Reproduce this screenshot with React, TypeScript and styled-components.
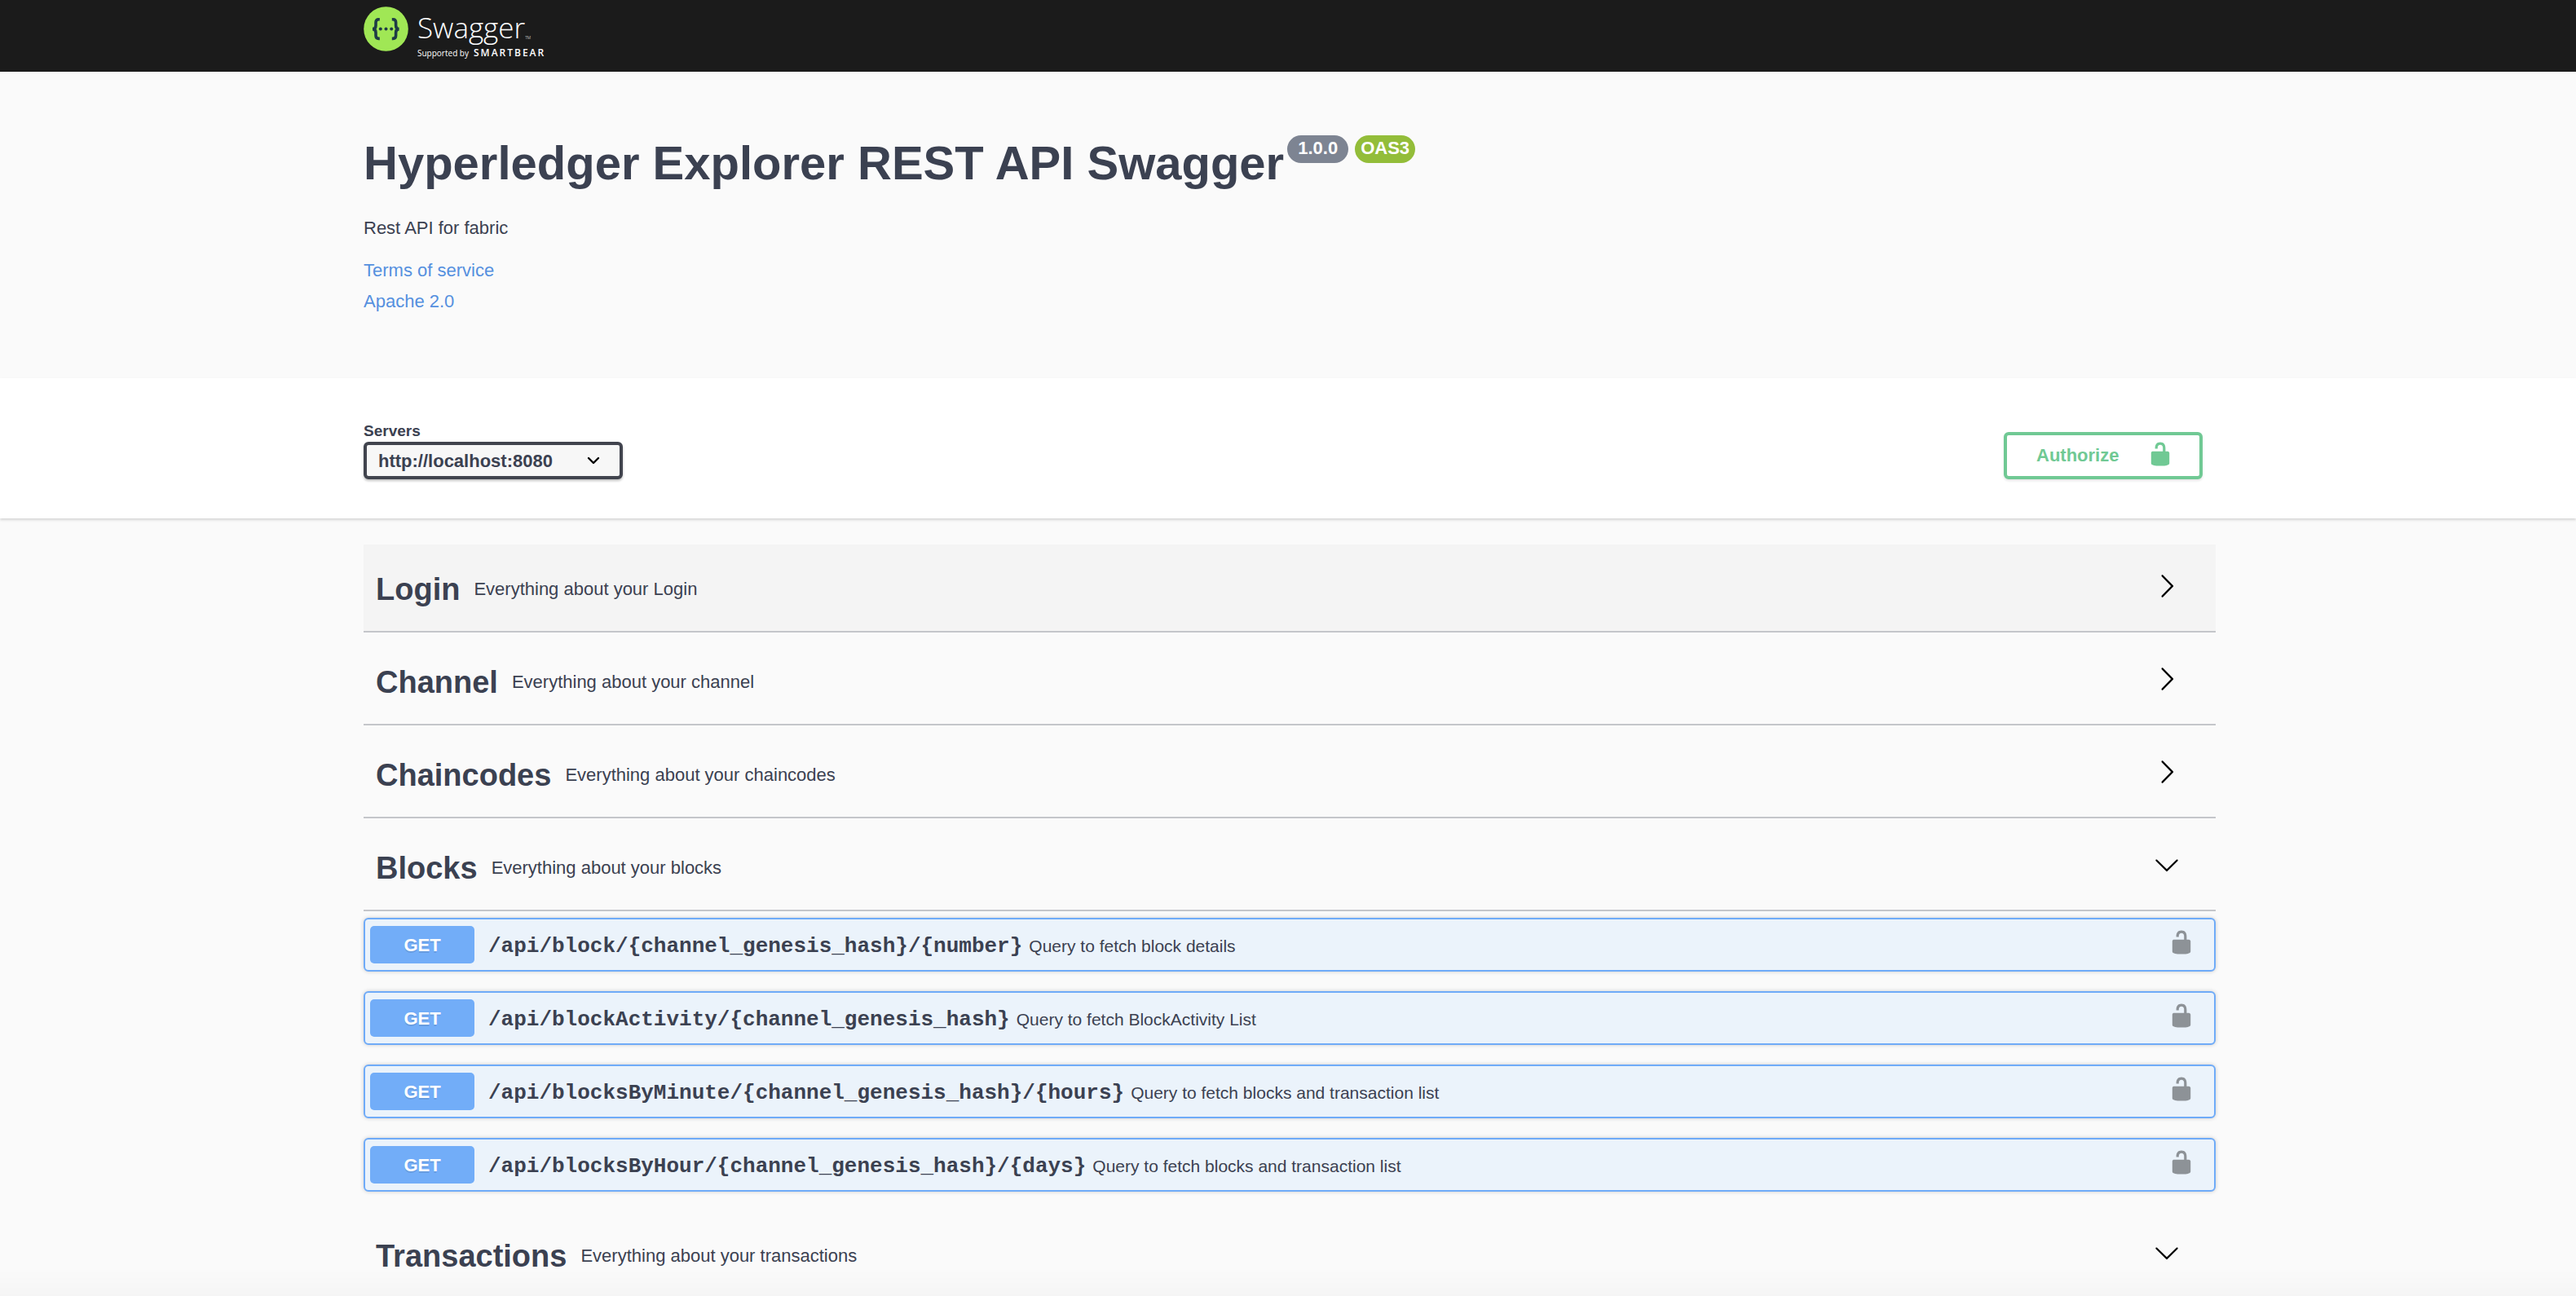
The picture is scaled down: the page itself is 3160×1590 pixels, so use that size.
import React, { useState } from "react";
import styled, { createGlobalStyle } from "styled-components";

const ink = "#3b4151";
const blue = "#6fabf8";
const green = "#70c994";

const GlobalStyle = createGlobalStyle`
  *, *::before, *::after { box-sizing: border-box; }
  body {
    margin: 0;
    overflow: hidden;
    background: #fafafa;
    color: ${ink};
    font-family: "Liberation Sans", Arial, Helvetica, sans-serif;
    font-size: 22px;
    line-height: 26px;
  }
  h1, h2, h3, p { margin: 0; }
  button { font: inherit; color: inherit; cursor: pointer; }
`;

const Page = styled.div`
  height: 100vh;
  overflow: hidden;

  &::after {
    content: "";
    position: fixed;
    inset: auto 0 0 0;
    height: 32px;
    background: linear-gradient(rgba(0, 0, 0, 0), rgba(0, 0, 0, 0.02));
    pointer-events: none;
  }
`;

const Wrapper = styled.div`
  max-width: 2276px;
  margin: 0 auto;
  padding-left: 4px;
`;

const TopBar = styled.header`
  height: 88px;
  padding-top: 8px;
  background: #1b1b1b;
`;

const LogoLink = styled.a`
  display: inline-flex;
  align-items: flex-start;
  gap: 10px;
  color: #fff;
  text-decoration: none;
  font-family: "Open Sans", "Noto Sans", sans-serif;
`;

const LogoWords = styled.span`
  display: flex;
  flex-direction: column;
  padding-top: 2px;
`;

const WordMark = styled.span`
  display: flex;
  align-items: flex-end;
  font-size: 35px;
  font-weight: 300;
  line-height: 48px;
`;

const TradeMark = styled.span`
  font-size: 5px;
  line-height: 24px;
`;

const Supported = styled.span`
  display: flex;
  align-items: baseline;
  gap: 6px;
  font-size: 10px;
  line-height: 14px;
`;

const Company = styled.b`
  font-size: 12px;
  font-weight: 600;
  letter-spacing: 2px;
`;

const Info = styled.section`
  padding: 78px 0 81px;
`;

const TitleRow = styled.div`
  display: flex;
  align-items: flex-start;
  gap: 4px;
  margin-bottom: 33px;
`;

const Title = styled.h1`
  font-size: 58px;
  line-height: 68px;
`;

const Badges = styled.div`
  display: flex;
  gap: 8px;
`;

const Badge = styled.span<{ $color: string; $pad: number }>`
  height: 34px;
  padding: 3px ${(p) => p.$pad}px;
  border-radius: 17px;
  background: ${(p) => p.$color};
  color: #fff;
  font-weight: 700;
`;

const Links = styled.nav`
  display: flex;
  flex-direction: column;
  align-items: flex-start;
  gap: 12px;
  margin-top: 26px;
`;

const InfoLink = styled.a`
  color: #5590df;
  text-decoration: none;
`;

const Scheme = styled.section`
  padding: 54px 0 48px;
  background: #fff;
  box-shadow: 0 2px 3px rgba(0, 0, 0, 0.15);
`;

const SchemeRow = styled.div`
  display: flex;
  align-items: flex-end;
  justify-content: space-between;
  padding-right: 16px;
`;

const ServerField = styled.div`
  display: flex;
  flex-direction: column;
  gap: 2px;
`;

const ServerLabel = styled.label`
  font-size: 19px;
  font-weight: 700;
  line-height: 22px;
`;

const SelectBox = styled.div`
  display: grid;
  align-items: center;
  width: 318px;

  & > * { grid-area: 1 / 1; }
  & > svg { justify-self: end; margin-right: 28px; pointer-events: none; }
`;

const ServerSelect = styled.select`
  appearance: none;
  width: 100%;
  height: 46px;
  padding: 0 60px 0 14px;
  border: 4px solid #41444e;
  border-radius: 6px;
  background: #f7f7f7;
  box-shadow: 0 2px 3px rgba(0, 0, 0, 0.25);
  color: ${ink};
  font-family: inherit;
  font-size: 22px;
  font-weight: 700;
`;

const Authorize = styled.button`
  display: flex;
  align-items: center;
  justify-content: space-between;
  width: 244px;
  height: 58px;
  padding: 0 32px 0 36px;
  border: 4px solid ${green};
  border-radius: 6px;
  background: #fff;
  box-shadow: 0 2px 3px rgba(0, 0, 0, 0.1);
  color: ${green};
  font-weight: 700;

  svg { margin-bottom: 4px; }
`;

const TagList = styled.main`
  padding-top: 32px;
`;

const TagHeader = styled.header<{ $active?: boolean }>`
  display: flex;
  align-items: center;
  gap: 17px;
  height: 108px;
  margin-bottom: 6px;
  padding: 4px 44px 0 15px;
  border-bottom: 2px solid #c4c6ca;
  background: ${(p) => (p.$active ? "#f4f4f4" : "transparent")};
`;

const TagTitle = styled.h2`
  font-size: 38px;
  line-height: 44px;
`;

const ToggleButton = styled.button`
  display: flex;
  margin-left: auto;
  padding: 0 0 8px;
  border: 0;
  background: none;
  color: #000;
`;

const Operations = styled.div`
  display: flex;
  flex-direction: column;
  gap: 24px;
  padding: 2px 0 24px;
`;

const Operation = styled.article`
  display: flex;
  align-items: center;
  gap: 17px;
  height: 66px;
  padding: 0 24px 0 6px;
  border: 2px solid ${blue};
  border-radius: 6px;
  background: #ebf3fb;
  box-shadow: 0 0 5px rgba(0, 0, 0, 0.19);
`;

const Method = styled.span`
  width: 128px;
  padding: 11px 0 9px;
  border-radius: 5px;
  background: #72adf8;
  color: #fff;
  font-weight: 700;
  text-align: center;
  text-shadow: 0 2px 0 rgba(0, 0, 0, 0.1);
`;

const Summary = styled.div`
  display: flex;
  align-items: baseline;
  gap: 8px;
  padding-top: 3px;
`;

const Path = styled.a`
  color: ${ink};
  font-family: "Liberation Mono", "Courier New", monospace;
  font-size: 26px;
  font-weight: 700;
  text-decoration: none;
`;

const SummaryText = styled.p`
  font-size: 21px;
`;

const LockButton = styled.button`
  display: flex;
  margin-left: auto;
  padding: 0 0 6px;
  border: 0;
  background: none;
  color: #8d9297;
`;

const UnlockIcon = () => (
  <svg width="32" height="32" viewBox="0 0 20 20" fill="currentColor" aria-hidden="true">
    <path d="M15.8 8H14V5.6C14 2.703 12.665 1 10 1 7.334 1 6 2.703 6 5.6V6h2v-.801C8 3.754 8.797 3 10 3c1.203 0 2 .754 2 2.199V8H4c-.553 0-1 .646-1 1.199V17c0 .549.428 1.139.951 1.307l1.197.387C5.672 18.861 6.55 19 7.1 19h5.8c.549 0 1.428-.139 1.951-.307l1.196-.387c.524-.167.953-.757.953-1.306V9.199C17 8.646 16.352 8 15.8 8z" />
  </svg>
);

const ArrowIcon = ({ open }: { open: boolean }) => (
  <svg width="32" height="32" viewBox="0 0 20 20" fill="currentColor" aria-hidden="true">
    {open ? (
      <path d="M17.418 6.109c.272-.268.709-.268.979 0s.271.701 0 .969l-7.908 7.83c-.27.268-.707.268-.979 0l-7.908-7.83c-.27-.268-.27-.701 0-.969.271-.268.709-.268.979 0L10 13.25l7.418-7.141z" />
    ) : (
      <path d="M13.25 10L6.109 2.58c-.268-.27-.268-.707 0-.979.268-.27.701-.27.969 0l7.83 7.908c.268.271.268.709 0 .979l-7.83 7.908c-.268.271-.701.27-.969 0-.268-.269-.268-.707 0-.979L13.25 10z" />
    )}
  </svg>
);

const SelectCaret = () => (
  <svg width="16" height="10" viewBox="0 0 16 10" fill="none" stroke="#000" strokeWidth="2.4" strokeLinecap="round" strokeLinejoin="round" aria-hidden="true">
    <path d="M2 2l6 6 6-6" />
  </svg>
);

const SwaggerMark = () => (
  <svg width="56" height="56" viewBox="0 0 56 56" aria-hidden="true">
    <circle cx="27.5" cy="27.5" r="27.3" fill="#a0e755" />
    <g fill="none" stroke="#1f3c46" strokeWidth="3.6">
      <path d="M19.8 15.8h-1.2c-2.600 0-3.600 1.400-3.600 3.800v3.600c0 2.600-1.200 4.400-4 4.400 2.800 0 4 1.800 4 4.400v3.600c0 2.400 1 3.800 3.600 3.800h1.200" />
      <path d="M34.800 15.800h1.200c2.600 0 3.600 1.400 3.600 3.800v3.600c0 2.600 1.200 4.400 4 4.400-2.800 0-4 1.800-4 4.400v3.600c0 2.400-1 3.800-3.600 3.800h-1.200" />
    </g>
    <g fill="#1f3c46">
      <circle cx="20.800" cy="27.600" r="2" />
      <circle cx="27.500" cy="27.600" r="2" />
      <circle cx="34.200" cy="27.600" r="2" />
    </g>
  </svg>
);

type Op = { path: string; summary: string };
type Tag = { name: string; description: string; open: boolean; active?: boolean; operations: Op[] };

const tags: Tag[] = [
  { name: "Login", description: "Everything about your Login", open: false, active: true, operations: [] },
  { name: "Channel", description: "Everything about your channel", open: false, operations: [] },
  { name: "Chaincodes", description: "Everything about your chaincodes", open: false, operations: [] },
  {
    name: "Blocks",
    description: "Everything about your blocks",
    open: true,
    operations: [
      { path: "/api/block/{channel_genesis_hash}/{number}", summary: "Query to fetch block details" },
      { path: "/api/blockActivity/{channel_genesis_hash}", summary: "Query to fetch BlockActivity List" },
      { path: "/api/blocksByMinute/{channel_genesis_hash}/{hours}", summary: "Query to fetch blocks and transaction list" },
      { path: "/api/blocksByHour/{channel_genesis_hash}/{days}", summary: "Query to fetch blocks and transaction list" },
    ],
  },
  { name: "Transactions", description: "Everything about your transactions", open: true, operations: [] },
];

const TagSection = ({ tag }: { tag: Tag }) => {
  const [open, setOpen] = useState(tag.open);
  return (
    <section>
      <TagHeader $active={tag.active}>
        <TagTitle>{tag.name}</TagTitle>
        <p>{tag.description}</p>
        <ToggleButton type="button" aria-expanded={open} aria-label={`Toggle ${tag.name}`} onClick={() => setOpen(!open)}>
          <ArrowIcon open={open} />
        </ToggleButton>
      </TagHeader>
      {open && tag.operations.length > 0 && (
        <Operations>
          {tag.operations.map((op) => (
            <Operation key={op.path}>
              <Method>GET</Method>
              <Summary>
                <Path href={`#${op.path}`}>{op.path}</Path>
                <SummaryText>{op.summary}</SummaryText>
              </Summary>
              <LockButton type="button" aria-label="Authorization">
                <UnlockIcon />
              </LockButton>
            </Operation>
          ))}
        </Operations>
      )}
    </section>
  );
};

export default function App() {
  return (
    <Page>
      <GlobalStyle />
      <TopBar>
        <Wrapper>
          <LogoLink href="#">
            <SwaggerMark />
            <LogoWords>
              <WordMark>
                Swagger<TradeMark>TM</TradeMark>
              </WordMark>
              <Supported>
                Supported by <Company>SMARTBEAR</Company>
              </Supported>
            </LogoWords>
          </LogoLink>
        </Wrapper>
      </TopBar>
      <Wrapper>
        <Info>
          <TitleRow>
            <Title>Hyperledger Explorer REST API Swagger</Title>
            <Badges>
              <Badge $color="#7d8492" $pad={13}>1.0.0</Badge>
              <Badge $color="#93bd39" $pad={7}>OAS3</Badge>
            </Badges>
          </TitleRow>
          <p>Rest API for fabric</p>
          <Links>
            <InfoLink href="#terms">Terms of service</InfoLink>
            <InfoLink href="#license">Apache 2.0</InfoLink>
          </Links>
        </Info>
      </Wrapper>
      <Scheme>
        <Wrapper>
          <SchemeRow>
            <ServerField>
              <ServerLabel htmlFor="servers">Servers</ServerLabel>
              <SelectBox>
                <ServerSelect id="servers">
                  <option>http://localhost:8080</option>
                </ServerSelect>
                <SelectCaret />
              </SelectBox>
            </ServerField>
            <Authorize type="button">
              Authorize
              <UnlockIcon />
            </Authorize>
          </SchemeRow>
        </Wrapper>
      </Scheme>
      <Wrapper>
        <TagList>
          {tags.map((tag) => (
            <TagSection key={tag.name} tag={tag} />
          ))}
        </TagList>
      </Wrapper>
    </Page>
  );
}
